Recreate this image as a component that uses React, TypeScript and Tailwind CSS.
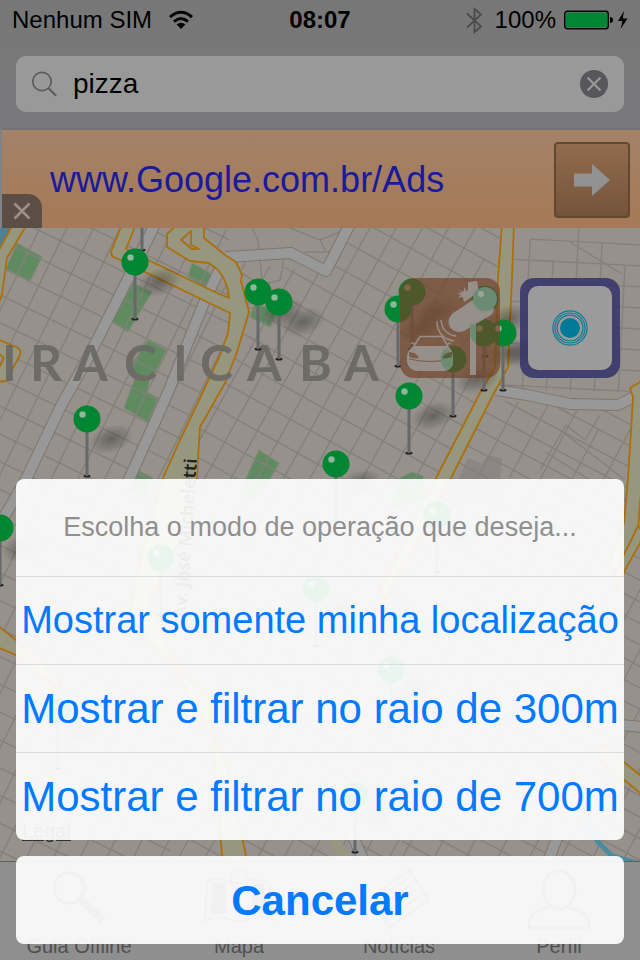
import React from "react";

const SANS = "font-['Liberation_Sans',Arial,sans-serif]";

type Pin = { x: number; y: number };

const PINS: Pin[] = [
  { x: 142, y: 193 },
  { x: 135, y: 262 },
  { x: 258, y: 292 },
  { x: 412, y: 292 },
  { x: 485, y: 299 },
  { x: 279, y: 302 },
  { x: 398, y: 309 },
  { x: 484, y: 333 },
  { x: 503, y: 333 },
  { x: 453, y: 359 },
  { x: 409, y: 396 },
  { x: 87, y: 419 },
  { x: 336, y: 464 },
  { x: 437, y: 515 },
  { x: 0, y: 528 },
  { x: 161, y: 558 },
  { x: 316, y: 589 },
  { x: 391, y: 670 },
  { x: 58, y: 711 },
  { x: 355, y: 795 },
];

const PARKS = [
  "17,243 42,257 30,281 6,269",
  "133,283 152,292 128,332 112,322",
  "148,340 166,350 155,373 135,378 133,362",
  "135,378 150,378 147,392 158,398 148,422 124,408",
  "192,263 213,275 208,288 188,277",
  "255,303 277,311 270,327 250,317",
  "259,450 279,463 266,486 250,502 240,492",
  "137,470 153,478 145,497 130,490",
  "400,478 412,472 423,476 424,500 390,510",
];

const LETTERS = "IRACICABA";

function range(from: number, to: number, step: number) {
  const out: number[] = [];
  for (let v = from; v <= to; v += step) out.push(v);
  return out;
}

function Grid({ x, y, w, h, dx, dy }: { x: number; y: number; w: number; h: number; dx: number; dy: number }) {
  return (
    <g stroke="#84807b" strokeWidth="1.4">
      {range(x, x + w, dx).map((v, i) => (
        <line key={"v" + v} x1={v} x2={v} y1={y + (i % 3) * dy} y2={y + h} />
      ))}
      {range(y, y + h, dy).map((v, i) => (
        <line key={"h" + v} x1={x + (i % 2) * dx} x2={x + w} y1={v} y2={v} />
      ))}
    </g>
  );
}

function PinShadow({ x, y }: Pin) {
  return <ellipse cx={x + 24} cy={y + 20} rx="23" ry="14" transform={`rotate(-18 ${x + 24} ${y + 20})`} fill="url(#pinShadow)" />;
}

function PinMark({ x, y }: Pin) {
  return (
    <g>
      <ellipse cx={x} cy={y + 57} rx="3.5" ry="1.5" fill="#222" />
      <rect x={x - 1.5} y={y + 10} width="3" height="47" fill="#66686b" />
      <circle cx={x} cy={y} r="13.5" fill="#008533" />
      <circle cx={x - 4.5} cy={y - 4.5} r="3.2" fill="#8fb59b" />
    </g>
  );
}

function CityMap() {
  const road = { fill: "#97967f", stroke: "#ab6f0c", strokeWidth: 1.8, strokeLinejoin: "round" as const };
  return (
    <svg className="absolute inset-0 h-full w-full" viewBox="0 228 640 633" preserveAspectRatio="xMidYMid slice" aria-hidden="true">
      <defs>
        <radialGradient id="pinShadow">
          <stop offset="0" stopColor="#000" stopOpacity="0.32" />
          <stop offset="0.5" stopColor="#000" stopOpacity="0.17" />
          <stop offset="1" stopColor="#000" stopOpacity="0" />
        </radialGradient>
        <clipPath id="west">
          <polygon points="0,228 226,228 250,312 200,430 170,520 170,861 0,861" />
        </clipPath>
        <clipPath id="centre">
          <polygon points="240,262 326,272 350,228 507,228 500,370 440,480 400,861 170,861 170,520 200,430 250,312" />
        </clipPath>
        <clipPath id="northeast">
          <polygon points="510,228 640,228 640,392 500,390" />
        </clipPath>
        <clipPath id="southeast">
          <polygon points="488,400 640,410 640,861 400,861 440,490" />
        </clipPath>
      </defs>
      <rect x="0" y="228" width="640" height="633" fill="#96918b" />
      <polygon points="0,228 14,228 0,252" fill="#4d8093" />
      {PARKS.map((p) => (
        <polygon key={p} points={p} fill="#608a60" stroke="#7c8a77" strokeWidth="1" />
      ))}
      <polygon points="468,458 482,464 488,455 502,458 498,500 450,500" fill="#8b8583" />

      <g clipPath="url(#west)">
        <g transform="rotate(26)">
          <Grid x={88} y={-10} w={520} h={900} dx={24} dy={25} />
        </g>
      </g>
      <g clipPath="url(#centre)">
        <g transform="rotate(29)">
          <Grid x={296} y={-60} w={520} h={900} dx={23} dy={26} />
        </g>
      </g>
      <g clipPath="url(#northeast)">
        <g transform="rotate(3)">
          <Grid x={518} y={190} w={160} h={220} dx={24} dy={21} />
        </g>
      </g>
      <g clipPath="url(#southeast)">
        <g transform="rotate(28)">
          <Grid x={590} y={60} w={420} h={640} dx={28} dy={19} />
        </g>
      </g>
      <g fill="none" stroke="#84807b" strokeWidth="1.4">
        <path d="M252 228 L258 240 L262 280 M284 258 L280 280 L258 286 M290 228 L320 240 L326 252 M304 252 L334 252 M320 240 L345 230" />
        <path d="M570 242 L622 274 M566 425 L585 440 L600 415 M560 430 L625 480 M540 470 L566 425 M545 452 L590 480" />
      </g>

      <g fill="none" strokeLinejoin="round">
        <g stroke="#7f756d" strokeWidth="12">
          <path d="M20 492 L60 408 L90 354 L140 255 L156 222" />
          <path d="M126 486 L167 395 L203 305 L222 264" />
          <path d="M226 257 L291 253 L326 271 L350 224" />
          <path d="M496 390 L527 395 L570 404 L618 405 L636 396" />
          <path d="M0 524 L28 476" />
          <path d="M620 725 L644 727" />
          <path d="M350 830 L366 866 M560 830 L545 870" />
        </g>
        <g stroke="#989899" strokeWidth="10">
          <path d="M20 492 L60 408 L90 354 L140 255 L156 222" />
          <path d="M126 486 L167 395 L203 305 L222 264" />
          <path d="M226 257 L291 253 L326 271 L350 224" />
          <path d="M496 390 L527 395 L570 404 L618 405 L636 396" />
          <path d="M0 524 L28 476" />
          <path d="M620 725 L644 727" />
          <path d="M350 830 L366 866 M560 830 L545 870" />
        </g>
      </g>

      <g {...road}>
        <path d="M122 224 L111 252 Q111 257 116 258 L145 272 L230 313 L228 333 L220 355 L200 398 L180 440 L163 478 L140 560 L128 620 L210 700 L222 856 L240 870 L246 856 L226 760 L180 680 L150 600 L180 540 L197 478 L198 458 L200 427 L225 383 L237 352 L249 312 L241 281 L242 275 L236 262 L225 255 L204 238 L204 224 L178 224 L167 234 L167 247 L190 261 L209 263 L218 270 Q228 282 229 298 L217 293 L148 260 L126 249 L136 224 Z" />
        <path d="M181 240 L191 231 L191 245 L199 249 L192 249 Z" fill="#96918b" />
        <path d="M13 224 L-2 252 L-2 306 L2 294 L7 258 L27 224 Z" />
        <path d="M-3 339 L16 347 Q22 350 20 355 L6 381 L-3 382 L-3 371 L4 358 L-3 352 Z" />
        <path d="M502 224 L498 278 L495 367 L480 393 L436 478 L380 590 L385 600 L451 478 L493 395 L508 367 L512 278 L514 224 Z" />
        <path d="M645 379 L630 388 L633 397 L632 415 L628 478 L624 523 L610 560 L616 575 L638 530 L642 478 L644 420 Z" />
        <path d="M645 534 L625 570 L618 590 L614 575 L638 526 Z" />
        <path d="M-3 625 L16 640 L60 680 L60 690 L16 655 L-3 647 Z" />
        <path d="M600 743 L645 779 L645 797 L600 760 Z" />
        <path d="M328 835 L342 866 L356 866 L336 835 Z" stroke="#97967f" />
      </g>
      <path d="M586 820 L598 842 L612 856 L640 864" fill="none" stroke="#4a8ba0" strokeWidth="5" />

      <text fill="#6c6a66" opacity="0.95" fontSize="50" className="font-['Lato',sans-serif] font-bold" y="381">
        {[2, 30, 73, 124, 173, 200, 247, 299, 344].map((x, i) => (
          <tspan key={x} x={x}>
            {LETTERS[i]}
          </tspan>
        ))}
      </text>
      <text
        transform="translate(197 459) rotate(-86)"
        textAnchor="end"
        fontSize="18"
        fill="#222"
        stroke="#97967f"
        strokeWidth="2"
        paintOrder="stroke"
        className="font-['Noto_Sans',sans-serif] font-semibold"
      >
        Av. José Micheletti
      </text>
      {PINS.map((p) => (
        <PinShadow key={`${p.x}-${p.y}`} {...p} />
      ))}
      {PINS.map((p) => (
        <PinMark key={`${p.x}-${p.y}`} {...p} />
      ))}
    </svg>
  );
}

function StatusBar() {
  return (
    <div className="grid h-10 grid-cols-3 items-center px-3 text-2xl text-black">
      <div className="flex items-center gap-4">
        <span className="whitespace-nowrap">Nenhum SIM</span>
        <svg width="26" height="20" viewBox="0 0 26 20" fill="none" stroke="#000" strokeWidth="3">
          <path d="M2 7.2 Q13 -2.6 24 7.2" />
          <path d="M6 11.6 Q13 5.4 20 11.6" />
          <path d="M8.6 14.4 Q13 11 17.4 14.4 L13 19 Z" fill="#000" stroke="none" />
        </svg>
      </div>
      <div className="text-center font-bold">08:07</div>
      <div className="flex items-center justify-end">
        <svg className="mr-3" width="17" height="27" viewBox="0 0 17 27" fill="none" stroke="#4b4b4b" strokeWidth="1.8">
          <path d="M1 6.5 L15 19.5 L8.5 25 V2 L15 7.5 L1 20.5" />
        </svg>
        <span>100%</span>
        <svg className="ml-2" width="64" height="20" viewBox="0 0 64 20">
          <rect x="0.8" y="1.2" width="43.4" height="17.6" rx="2.5" fill="none" stroke="#000" strokeWidth="1.4" />
          <rect x="2" y="2.4" width="41" height="15.2" rx="1.5" fill="#008533" />
          <path d="M46 7 Q49 7 49 10 Q49 13 46 13 Z" fill="#000" />
          <path d="M60 1 L54 11 H58.4 L56.6 19 L63.6 8.4 H58.8 Z" fill="#000" />
        </svg>
      </div>
    </div>
  );
}

function SearchField() {
  return (
    <div className="p-4">
      <div className="flex h-14 items-center gap-4 rounded-[10px] bg-[#999999] px-4">
        <svg width="25" height="26" viewBox="0 0 25 26" fill="none" stroke="#5b5b60" strokeWidth="1.7" aria-hidden="true">
          <circle cx="10" cy="10.5" r="9.2" />
          <path d="M16.6 17.2 L24.2 24.8" strokeWidth="2.2" />
        </svg>
        <input
          type="text"
          aria-label="Buscar"
          defaultValue="pizza"
          className="min-w-0 flex-1 bg-transparent text-[28px] leading-9 text-black outline-none"
        />
        <button type="button" aria-label="Limpar busca">
          <svg width="28" height="28" viewBox="0 0 28 28">
            <circle cx="14" cy="14" r="14" fill="#57575b" />
            <path d="M7.5 7.5 L20.5 20.5 M20.5 7.5 L7.5 20.5" stroke="#999999" strokeWidth="2.2" />
          </svg>
        </button>
      </div>
    </div>
  );
}

function AdBanner() {
  return (
    <div className="relative flex h-[100px] items-center border-t-2 border-l-2 border-t-[#737375] border-l-[#808286] bg-linear-to-b from-[#a48267] to-[#a57957] pt-0.5 pr-[10px] pl-12">
      <a href="#ads" className="flex-1 text-4xl whitespace-nowrap text-[#1a1a9c]">
        www.Google.com.br/Ads
      </a>
      <button
        type="button"
        aria-label="Abrir anúncio"
        className="flex size-19 items-center justify-center rounded border-2 border-[#634830] bg-linear-to-b from-[#936c4d] to-[#73543b]"
      >
        <svg width="36" height="32" viewBox="0 0 36 32" fill="#929292">
          <path d="M0 9.5 H18 V0 L36 16 L18 32 V22.5 H0 Z" />
        </svg>
      </button>
      <button
        type="button"
        aria-label="Fechar anúncio"
        className="absolute bottom-0 left-0 flex h-[34px] w-10 items-center justify-center rounded-tr-[14px] bg-[#5c4e44]"
      >
        <svg width="18" height="18" viewBox="0 0 18 18" stroke="#9c9087" strokeWidth="2.6">
          <path d="M1.5 1.5 L16.5 16.5 M16.5 1.5 L1.5 16.5" />
        </svg>
      </button>
    </div>
  );
}

function TrafficCameraIcon() {
  return (
    <svg viewBox="0 0 100 100" className="size-full opacity-85" fill="#9b9896">
      <rect x="70" y="44" width="6" height="53" />
      <path d="M68 4 L77 3 L79 14 L64 24 L63 20 L68 11 Z" />
      <path d="M57 11 L63 14 L65 9 L68 20 L61 19 L58 20 L61 17 L57 15 L62 15 Z" />
      <path d="M50 39 Q52 35 58 32 L80 17 Q88 15 92 24 Q96 33 91 37 L64 53 Q55 56 50 49 Q47 43 50 39 Z" />
      <g fill="none" stroke="#9b9896" strokeWidth="1.4">
        <path d="M37 43 Q37 60 54 63" />
        <path d="M41 42 Q42 56 56 58" />
      </g>
      <path d="M14 68 L20 58.5 H42 L48 68" fill="none" stroke="#9b9896" strokeWidth="1.6" />
      <path d="M10 65 Q14 63 15 67 Z M52 65 Q48 63 47 67 Z" />
      <path d="M14 68 H48 Q53 72 53 80 V86 Q51 92 45 93 H16 Q8 91 7 84 V78 Q8 71 14 68 Z" />
      <g fill="#7d5c47">
        <path d="M9 74 Q16 74 19 80 Q11 81 9 78 Z" />
        <path d="M52 74 Q45 74 42 80 Q50 81 52 78 Z" />
      </g>
      <path d="M9 81 Q30 86 52 81" fill="none" stroke="#7d5c47" strokeWidth="1" />
      <circle cx="85" cy="21" r="12" fill="#70947f" />
      <circle cx="81" cy="16" r="3" fill="#9fb0a5" />
      <path d="M45 71 Q53 73 53 80 V86 Q51 91 47 92 Q41 88 41 81 Q41 75 45 71 Z" fill="#70947f" />
      <path d="M52 74 Q45 74 42 80 Q50 81 52 78 Z" fill="#5a5c38" />
      <path d="M70 46 H76 V66 Q72 62 70 58 Z" fill="#70947f" />
    </svg>
  );
}

function MapArea() {
  return (
    <main className="relative min-h-[400px] flex-1 overflow-hidden">
      <CityMap />
      <div className="absolute top-[50px] right-5 flex gap-5">
        <button type="button" aria-label="Radares" className="size-25 rounded-[14px] bg-[#724428]/69">
          <TrafficCameraIcon />
        </button>
        <button
          type="button"
          aria-label="Minha localização"
          className="size-25 rounded-[14px] bg-[#38376a]/90 p-2"
        >
          <span className="flex size-full items-center justify-center rounded-[10px] bg-[#9c9b9b]">
            <svg width="38" height="38" viewBox="0 0 38 38" fill="none" stroke="#087b95" strokeWidth="1.2">
              <circle cx="19" cy="19" r="10" fill="#007a97" stroke="none" />
              <circle cx="19" cy="19" r="12.9" />
              <circle cx="19" cy="19" r="15" />
              <circle cx="19" cy="19" r="17.1" />
            </svg>
          </span>
        </button>
      </div>
      <a href="#legal" className="absolute bottom-4 left-[22px] text-xl text-[#333] underline">
        Legal
      </a>
    </main>
  );
}

const TABS = [
  {
    label: "Guia Offline",
    icon: (
      <>
        <circle cx="26" cy="22" r="15" strokeWidth="3" />
        <path d="M37 33 L60 54" strokeWidth="8" />
      </>
    ),
  },
  {
    label: "Mapa",
    icon: (
      <>
        <path d="M4 16 Q14 10 24 15 Q36 20 46 14 Q56 12 66 18 L70 54 Q58 48 46 53 Q34 58 24 52 Q12 50 2 55 Z" />
        <path d="M11 18 L8 47 L22 47 L22 18 Z M60 18 L63 47 L50 47 L50 18 Z" fill="#555" />
        <circle cx="36" cy="13" r="9" />
      </>
    ),
  },
  {
    label: "Notícias",
    icon: <path d="M10 30 L46 4 L66 34 L26 62 Z M20 30 L46 11 M24 36 L50 17 M28 42 L54 23 M32 48 L58 29" />,
  },
  {
    label: "Perfil",
    icon: (
      <>
        <ellipse cx="36" cy="24" rx="16" ry="19" strokeWidth="3" />
        <path d="M26 42 Q6 44 6 60 Q6 62 8 62 H64 Q66 62 66 60 Q66 44 46 42" strokeWidth="3" />
      </>
    ),
  },
];

function TabBar() {
  return (
    <nav className="grid h-[99px] shrink-0 grid-cols-4 border-t border-[#5f5f5f] bg-[#8f8f8f]">
      {TABS.map((tab) => (
        <a key={tab.label} href={"#" + tab.label} className="flex flex-col items-center pt-1 pr-0.5 text-xl text-[#505050]">
          <svg width="72" height="68" viewBox="0 0 72 68" fill="none" stroke="#555" strokeWidth="2" aria-hidden="true">
            {tab.icon}
          </svg>
          <span className="leading-6 whitespace-nowrap">{tab.label}</span>
        </a>
      ))}
    </nav>
  );
}

function ActionSheet() {
  const row = "flex h-22 w-full items-center justify-center border-t border-[#dcdce0] whitespace-nowrap";
  return (
    <div role="dialog" aria-labelledby="sheet-title" className="absolute inset-x-0 bottom-0 flex flex-col gap-4 p-4 text-[#007aff]">
      <div className="overflow-hidden rounded-lg bg-white/92">
        <h2 id="sheet-title" className="flex h-[97px] items-center justify-center text-[27px] whitespace-nowrap text-[#8f8f8f]">
          Escolha o modo de operação que deseja...
        </h2>
        <button type="button" className={row + " text-[38px]"}>
          Mostrar somente minha localização
        </button>
        <button type="button" className={row + " text-[42px]"}>
          Mostrar e filtrar no raio de 300m
        </button>
        <button type="button" className={row + " text-[42px]"}>
          Mostrar e filtrar no raio de 700m
        </button>
      </div>
      <button type="button" className="h-22 w-full rounded-lg bg-white/92 text-[42px] font-bold">
        Cancelar
      </button>
    </div>
  );
}

export default function App() {
  return (
    <div className={"relative flex min-h-screen flex-col overflow-hidden bg-[#79797b] " + SANS}>
      <header className="bg-linear-to-b from-[#777777] to-[#79797c]">
        <StatusBar />
        <SearchField />
      </header>
      <AdBanner />
      <MapArea />
      <TabBar />
      <ActionSheet />
    </div>
  );
}
